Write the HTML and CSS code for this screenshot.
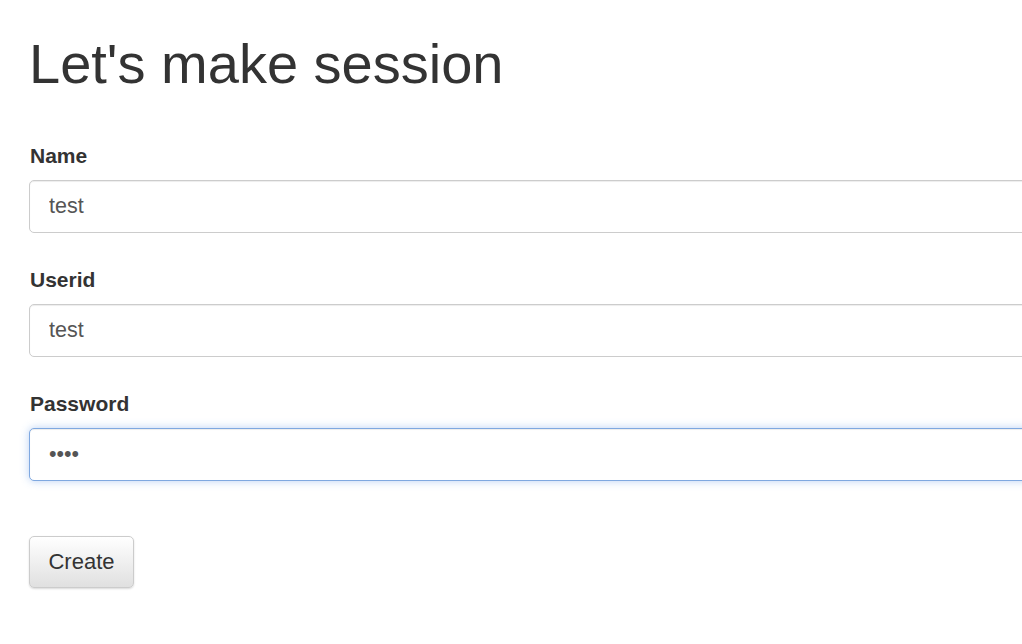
FILE: index.html
```html
<!DOCTYPE html>
<html>
<head>
<meta charset="utf-8">
<link rel="stylesheet" href="styles.css">
</head>
<body>
<div class="page">
  <h1 class="title">Let's make session</h1>
  <form class="form">
    <div class="group">
      <label class="label">Name</label>
      <input class="control" type="text" value="test">
    </div>
    <div class="group">
      <label class="label">Userid</label>
      <input class="control" type="text" value="test">
    </div>
    <div class="group">
      <label class="label">Password</label>
      <input class="control focused" type="password" value="test">
    </div>
    <button class="btn" type="button">Create</button>
  </form>
</div>
</body>
</html>
```
FILE: styles.css
```css
html, body {
  margin: 0;
  padding: 0;
  background: #fff;
  overflow: hidden;
}
body {
  font-family: "Liberation Sans", Arial, sans-serif;
  color: #333;
  width: 1022px;
  height: 644px;
}
.page {
  padding: 0 0 0 29px;
  width: 1200px;
}
.title {
  margin: 0;
  padding-top: 28px;
  font-size: 56px;
  font-weight: 400;
  line-height: 72px;
  color: #333;
}
.form {
  display: flex;
  flex-direction: column;
  margin-top: 42px;
}
.group {
  display: flex;
  flex-direction: column;
  margin-bottom: 33px;
}
.label {
  font-size: 21px;
  font-weight: 700;
  line-height: 28px;
  margin-bottom: 10px;
  padding-left: 1px;
}
.control {
  box-sizing: border-box;
  width: 1100px;
  height: 53px;
  padding: 0 19px;
  font-family: "Liberation Sans", Arial, sans-serif;
  font-size: 21.5px;
  color: #555;
  background: #fff;
  border: 1px solid #ccc;
  border-radius: 5px;
  box-shadow: inset 0 1px 1px rgba(0,0,0,0.075);
  outline: none;
}
.control.focused {
  border-color: #7fa8e0;
  box-shadow: inset 0 1px 1px rgba(0,0,0,0.075), 0 0 8px rgba(102,155,233,0.45);
}
.btn {
  align-self: flex-start;
  margin-top: 22px;
  width: 105px;
  height: 52px;
  font-family: "Liberation Sans", Arial, sans-serif;
  font-size: 22px;
  color: #333;
  background: linear-gradient(to bottom, #fff 0%, #e0e0e0 100%);
  border: 1px solid #ccc;
  border-radius: 5px;
  box-shadow: inset 0 1px 0 rgba(255,255,255,0.15), 0 1px 2px rgba(0,0,0,0.15);
  padding: 0;
}
```
